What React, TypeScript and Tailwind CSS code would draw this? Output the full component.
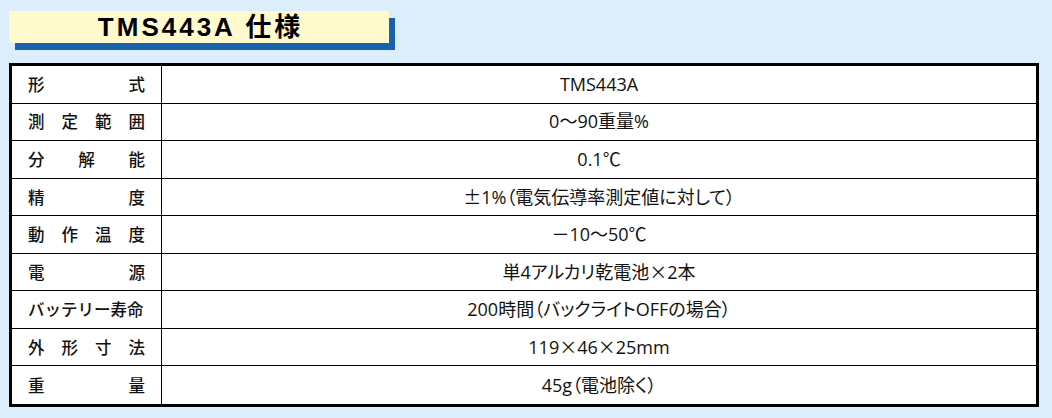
import React from "react";

const J = ({ children }: { children: React.ReactNode }) => (
  <span style={{ fontFamily: '"Noto Sans CJK JP", sans-serif' }}>{children}</span>
);

const rows: { label: string[]; value: React.ReactNode }[] = [
  { label: ["形", "式"], value: "TMS443A" },
  { label: ["測", "定", "範", "囲"], value: "0〜90重量%" },
  { label: ["分", "解", "能"], value: "0.1℃" },
  {
    label: ["精", "度"],
    value: (
      <>
        <J>±</J>1%（電気伝導率測定値に対して）
      </>
    ),
  },
  { label: ["動", "作", "温", "度"], value: "－10〜50℃" },
  {
    label: ["電", "源"],
    value: (
      <>
        単4アルカリ乾電池<J>×</J>2本
      </>
    ),
  },
  { label: ["バッテリー寿命"], value: "200時間（バックライトOFFの場合）" },
  {
    label: ["外", "形", "寸", "法"],
    value: (
      <>
        119<J>×</J>46<J>×</J>25mm
      </>
    ),
  },
  { label: ["重", "量"], value: "45g（電池除く）" },
];

export default function App() {
  return (
    <div
      className="w-[1052px] h-[418px] bg-[#dcedfb] overflow-hidden"
      style={{ fontFamily: '"Noto Sans CJK JP", "Noto Sans", sans-serif' }}
    >
      <div className="pt-[11px] pl-[9px]">
        <div className="w-[380px] h-[32px] bg-[#fffacd] shadow-[6px_7px_0_#1662ae] flex items-center justify-center">
          <span
            className="text-[26px] font-bold text-black tracking-[3px] leading-none pl-[3px]"
            style={{ fontFamily: '"Liberation Sans", "Noto Sans CJK JP", sans-serif' }}
          >
            TMS443A 仕様
          </span>
        </div>
      </div>
      <div className="mt-[20px] ml-[9px] w-[1030px] border-[3px] border-black bg-white flex flex-col">
        {rows.map((r, i) => (
          <div
            key={i}
            className={`flex h-[37.55px] ${i < rows.length - 1 ? "border-b border-black" : ""}`}
          >
            <div className="w-[150px] shrink-0 border-r border-black flex items-center justify-between px-[16px] text-[16.5px] font-medium text-[#111] whitespace-nowrap">
              {r.label.map((c, j) => (
                <span key={j}>{c}</span>
              ))}
            </div>
            <div
              className="flex-1 flex items-center justify-center text-[18px] text-[#111] whitespace-nowrap"
              style={{
                fontFamily: '"Open Sans", "Noto Sans CJK JP", sans-serif',
                fontFeatureSettings: '"palt"',
              }}
            >
              <span>{r.value}</span>
            </div>
          </div>
        ))}
      </div>
    </div>
  );
}
